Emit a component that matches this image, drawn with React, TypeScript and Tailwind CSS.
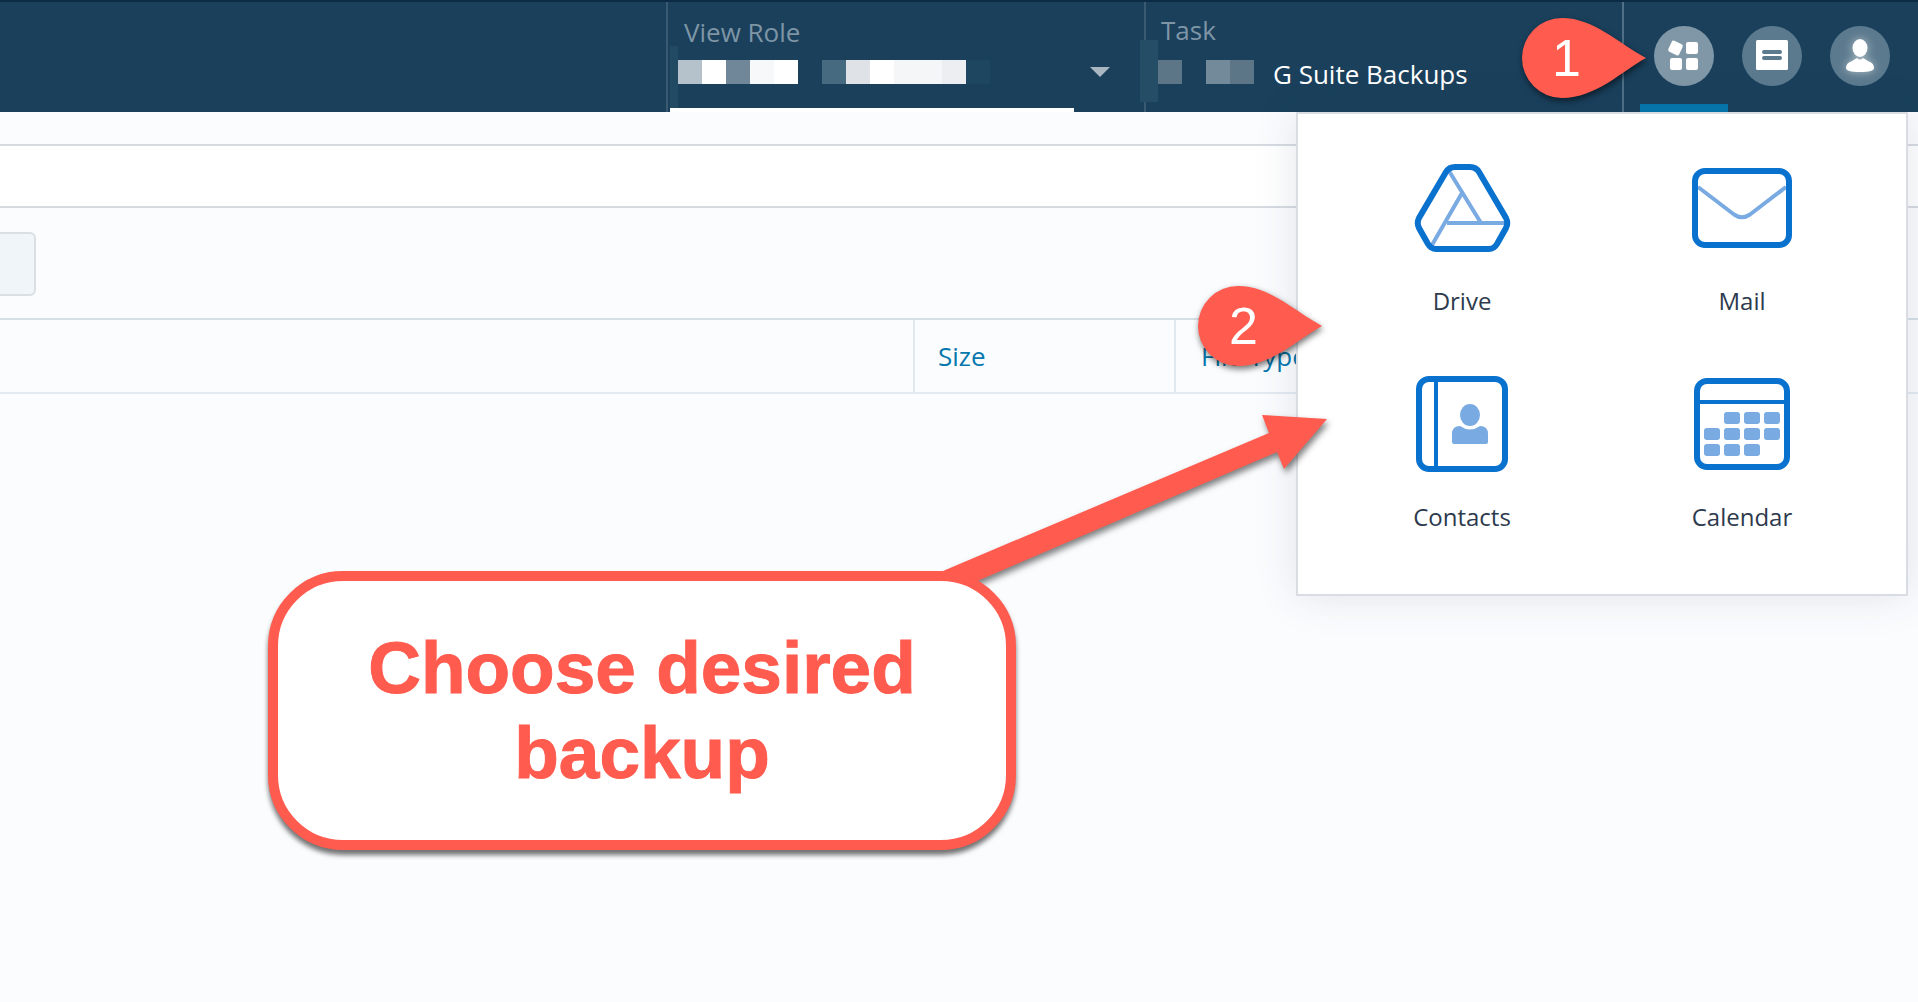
import React from 'react';

const sans = "font-['Open_Sans',sans-serif]";
const arial = "font-['Liberation_Sans',Arial,sans-serif]";

// redacted value blocks in the header
const roleBlocks = ['#b5c2cb', '#ffffff', '#6f8799', '#f7f8fa', '#ffffff', 'transparent', '#466a80', '#dfe3e8', '#ffffff', '#f5f6f8', '#f5f6f8', '#eceef1', '#1f4660'];
const taskBlocks = ['#5c7688', 'transparent', '#738a9b', '#5c7688'];

const Blocks = ({ colors }: { colors: string[] }) => (
  <div className="flex h-6">
    {colors.map((c, i) => (
      <div key={i} className="w-6 h-6" style={{ backgroundColor: c }} />
    ))}
  </div>
);

const AppsIcon = () => (
  <svg width="60" height="60" viewBox="0 0 60 60" fill="#fff">
    <rect x="15.5" y="16" width="12" height="12" rx="2" transform="rotate(25 21.5 22)" />
    <rect x="32" y="16" width="12" height="12" rx="2" />
    <rect x="16" y="32" width="12" height="12" rx="2" />
    <rect x="32" y="32" width="12" height="12" rx="2" />
  </svg>
);

const NotesIcon = () => (
  <svg width="60" height="60" viewBox="0 0 60 60">
    <rect x="14" y="14" width="32" height="30" rx="1.5" fill="#fff" />
    <rect x="20" y="24" width="20" height="4" rx="2" fill="#5c7a8e" />
    <rect x="20" y="30" width="20" height="4" rx="2" fill="#5c7a8e" />
  </svg>
);

const UserIcon = () => (
  <svg width="60" height="60" viewBox="0 0 60 60" fill="#fff" className="drop-shadow-[0_0_5px_rgba(255,255,255,0.55)]">
    <ellipse cx="30" cy="22" rx="7.5" ry="9" />
    <path d="M16 42 Q16 37 22 35 L27 32 Q30 35 33 32 L38 35 Q44 37 44 42 Q44 46 30 46 Q16 46 16 42 Z" />
  </svg>
);

const DriveIcon = () => (
  <svg width="97" height="88" viewBox="0 0 97 88" fill="none">
    <path d="M35 7 L67 59 M33 59 H91 M48 29 L18 81" stroke="#7aaae2" strokeWidth="4" />
    <path d="M41 3 H56 Q62 3 65 8 L92 54 Q94.5 59 92 64 L83 80 Q80 85 75 85 H22 Q17 85 14 80 L5 64 Q2.5 59 5 54 L32 8 Q35 3 41 3 Z" stroke="#0971ce" strokeWidth="6" />
  </svg>
);

const MailIcon = () => (
  <svg width="100" height="80" viewBox="0 0 100 80" fill="none">
    <path d="M6 19 L42 46.5 Q50 52 58 46.5 L94 19" stroke="#7aaae2" strokeWidth="4" />
    <rect x="3" y="3" width="94" height="74" rx="10" stroke="#0971ce" strokeWidth="6" />
  </svg>
);

const ContactsIcon = () => (
  <svg width="92" height="96" viewBox="0 0 92 96" fill="none">
    <rect x="3" y="3" width="86" height="90" rx="10" stroke="#0971ce" strokeWidth="6" />
    <path d="M20 3 V93" stroke="#0971ce" strokeWidth="4" />
    <ellipse cx="54" cy="39" rx="10" ry="11" fill="#7aaae2" />
    <path d="M36 58 Q36 50 44 50 Q54 57 64 50 Q72 50 72 58 V66 Q72 68 70 68 H38 Q36 68 36 66 Z" fill="#7aaae2" />
  </svg>
);

const calendarCells = [
  [30, 34], [50, 34], [70, 34],
  [10, 50], [30, 50], [50, 50], [70, 50],
  [10, 66], [30, 66], [50, 66],
];

const CalendarIcon = () => (
  <svg width="96" height="92" viewBox="0 0 96 92" fill="none">
    <rect x="3" y="3" width="90" height="86" rx="10" stroke="#0971ce" strokeWidth="6" />
    <path d="M3 24 H93" stroke="#0971ce" strokeWidth="4" />
    {calendarCells.map(([x, y]) => (
      <rect key={`${x}-${y}`} x={x} y={y} width="16" height="12" rx="3" fill="#7aaae2" />
    ))}
  </svg>
);

const backups = [
  { name: 'Drive', icon: <DriveIcon /> },
  { name: 'Mail', icon: <MailIcon /> },
  { name: 'Contacts', icon: <ContactsIcon /> },
  { name: 'Calendar', icon: <CalendarIcon /> },
];

const Pin = ({ className, label, textClass }: { className: string; label: string; textClass: string }) => (
  <div className={`absolute w-[126px] h-[82px] ${className}`}>
    <svg width="126" height="82" viewBox="0 0 126 82" className="drop-shadow-[1px_3px_3px_rgba(0,0,0,0.55)]">
      <path d="M124 40 C100 53 74 80 40 80 A40 40 0 1 1 40 0 C72 0 96 25 124 40 Z" fill="#ff5b4e" />
    </svg>
    <span className={`absolute text-white text-[52px] leading-[60px] ${arial} ${textClass}`}>{label}</span>
  </div>
);

export default function App() {
  return (
    <div className={`relative w-full h-screen overflow-hidden flex flex-col bg-[#fbfcfe] ${sans}`}>
      {/* Top bar */}
      <header className="h-[112px] shrink-0 flex bg-[#1a405c] border-t-2 border-[#0c2b45]">
        <div className="w-[666px] shrink-0" />

        <div className="relative w-[478px] shrink-0 border-l-2 border-[#3a5a72] pl-[16px]">
          <div className="h-[38px] pt-[12px] text-[26px] leading-[36px] text-[#7e95a6]">View Role</div>
          <div className="mt-[20px] ml-[-6px] flex items-center">
            <Blocks colors={roleBlocks} />
            <div className="ml-[100px] w-0 h-0 border-l-[10px] border-r-[10px] border-t-[10px] border-l-transparent border-r-transparent border-t-[#a9b7c2]" />
          </div>
          <div className="absolute left-[2px] top-[44px] w-2 h-[62px] bg-[#234a63]" />
          <div className="absolute left-[2px] bottom-0 w-[404px] h-1 bg-white" />
        </div>

        <div className="relative w-[478px] shrink-0 border-l-2 border-[#3a5a72] pl-[15px]">
          <div className="h-[38px] pt-[10px] text-[26px] leading-[36px] text-[#7e95a6]">Task</div>
          <div className="relative h-[72px] ml-[-15px] flex pl-[12px] pt-[20px] bg-[#1a405c]">
            <Blocks colors={taskBlocks} />
            <span className="ml-[19px] mt-[-1px] text-[26px] leading-[30px] text-white">G Suite Backups</span>
          </div>
          <div className="absolute left-[-6px] top-[38px] w-[18px] h-[62px] bg-[#264d66]" />
        </div>

        <div className="flex-1 flex border-l-2 border-[#4f7087] pl-[30px] gap-[28px] pt-[24px]">
          <div className="relative w-[60px] h-[60px] rounded-full bg-[#7f97a6]">
            <AppsIcon />
            <div className="absolute left-[-14px] top-[78px] w-[88px] h-2 bg-[#0577ae]" />
          </div>
          <div className="w-[60px] h-[60px] rounded-full bg-[#5c7a8e]">
            <NotesIcon />
          </div>
          <div className="w-[60px] h-[60px] rounded-full bg-[#5c7a8e]">
            <UserIcon />
          </div>
        </div>
      </header>

      {/* Page rows behind the menu */}
      <div className="h-[34px] shrink-0 border-b-2 border-[#d7dae1]" />
      <div className="h-[62px] shrink-0 bg-white border-b-2 border-[#d7dae1]" />
      <div className="h-[112px] shrink-0 flex items-center pt-[2px] border-b-2 border-[#d5e0e6]">
        <div className="w-[36px] h-[64px] bg-[#f0f5f9] border-2 border-l-0 border-[#dbdfe4] rounded-r-md" />
      </div>
      <div className="h-[74px] shrink-0 flex border-b-2 border-[#e4eaf1]">
        <div className="w-[915px] shrink-0 border-r-2 border-[#e1e9f0]" />
        <div className="w-[261px] shrink-0 border-r-2 border-[#e1e9f0] pl-[23px] flex items-center text-[26px] text-[#0678ad]">Size</div>
        <div className="flex-1 pl-[25px] flex items-center text-[26px] text-[#0678ad]">File Type</div>
      </div>

      {/* Apps menu */}
      <div className="absolute left-[1296px] top-[112px] w-[612px] h-[484px] pt-[44px] bg-white border-2 border-[#d9dce3] shadow-[0_0_40px_rgba(40,60,90,0.13)]">
        <div className="grid grid-cols-[280px_280px] justify-center gap-y-[58px]">
          {backups.map((b) => (
            <div key={b.name} className="flex flex-col items-center">
              <div className="h-[100px] flex items-center justify-center">{b.icon}</div>
              <div className="mt-[28px] text-[24px] leading-[30px] text-[#2e3a4d]">{b.name}</div>
            </div>
          ))}
        </div>
      </div>

      {/* Annotations */}
      <Pin className="left-[1522px] top-[18px]" label="1" textClass="left-[30px] top-[10px]" />
      <Pin className="left-[1198px] top-[286px]" label="2" textClass="left-[31px] top-[10px]" />

      <svg width="410" height="190" viewBox="0 0 410 190" className="absolute left-[930px] top-[410px] drop-shadow-[2px_4px_3px_rgba(0,0,0,0.5)]">
        <polygon points="397,9 332,5 339,23 13,161 45,172 347,42 354,59" fill="#ff5b4e" />
      </svg>

      <div className={`absolute left-[268px] top-[571px] w-[748px] h-[279px] pb-[2px] flex items-center justify-center text-center bg-white border-[10px] border-[#ff5b4e] rounded-[75px] shadow-[0_5px_5px_rgba(0,0,0,0.55)] text-[73px] leading-[85px] font-bold text-[#ff5b4e] [-webkit-text-stroke:1px_#ff5b4e] ${arial}`}>
        Choose desired
        <br />
        backup
      </div>
    </div>
  );
}
